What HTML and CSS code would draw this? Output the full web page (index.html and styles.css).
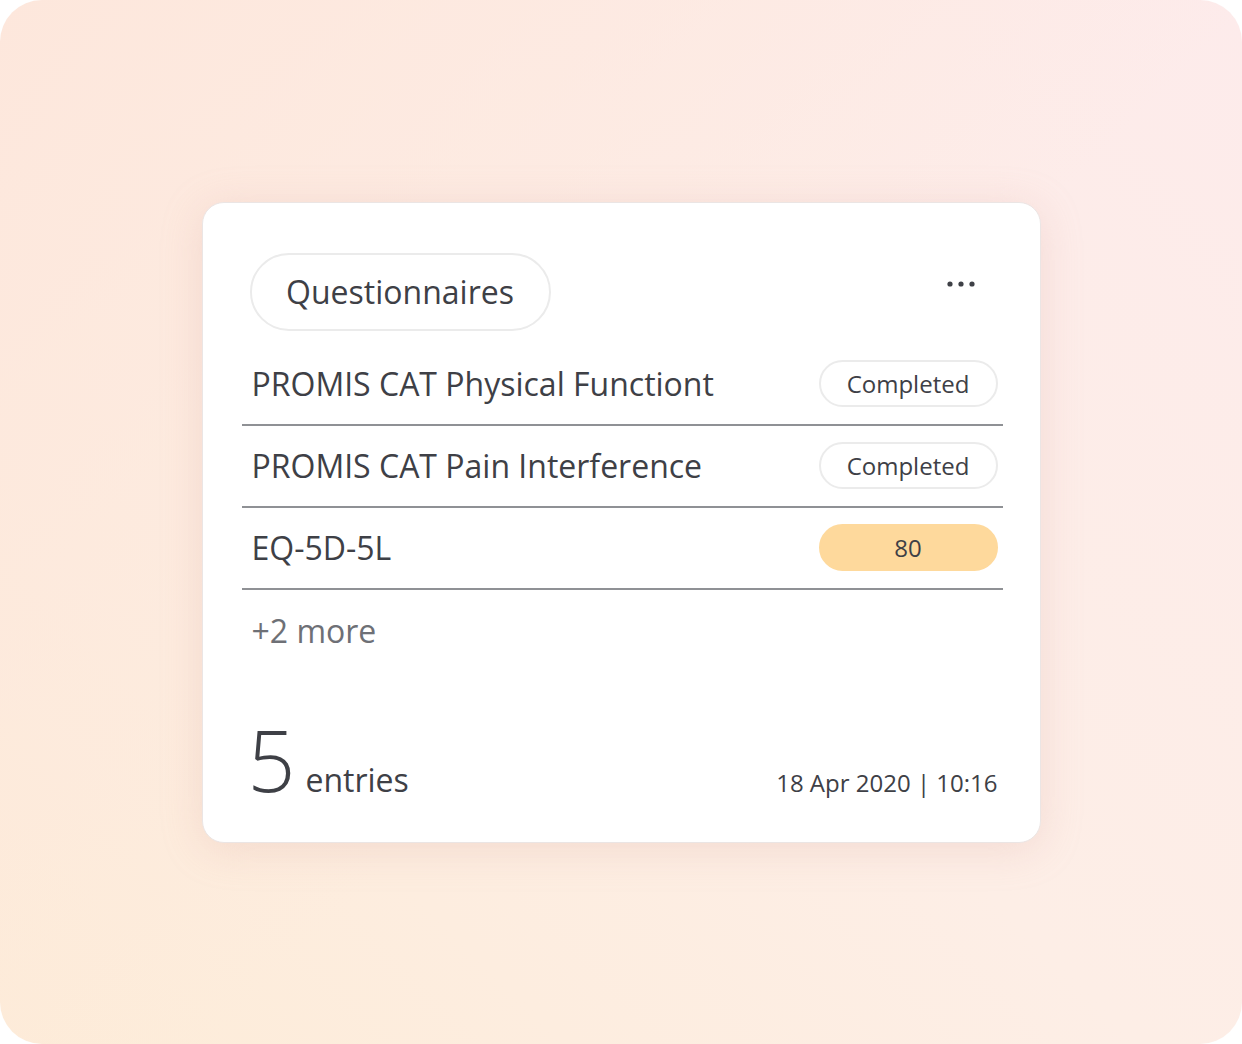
FILE: index.html
```html
<!DOCTYPE html>
<html lang="en">
<head>
<meta charset="utf-8">
<title>Questionnaires</title>
<link rel="stylesheet" href="styles.css">
</head>
<body>
<div class="frame">
  <section class="card">
    <header class="card-head">
      <span class="title-pill">Questionnaires</span>
      <button class="more-btn" aria-label="More options">
        <svg width="30" height="8" viewBox="0 0 30 8"><circle cx="4" cy="4" r="2.6" fill="#3e4046"/><circle cx="15" cy="4" r="2.6" fill="#3e4046"/><circle cx="26" cy="4" r="2.6" fill="#3e4046"/></svg>
      </button>
    </header>
    <ul class="list">
      <li class="row"><span class="name">PROMIS CAT Physical Functiont</span><span class="status">Completed</span></li>
      <li class="row"><span class="name">PROMIS CAT Pain Interference</span><span class="status">Completed</span></li>
      <li class="row"><span class="name">EQ-5D-5L</span><span class="status score">80</span></li>
      <li class="row more">+2 more</li>
    </ul>
    <footer class="card-foot">
      <div class="count"><span class="num">5</span><span class="label">entries</span></div>
      <div class="date">18 Apr 2020 | 10:16</div>
    </footer>
  </section>
</div>
</body>
</html>
```
FILE: styles.css
```css
* { box-sizing: border-box; }
html, body { margin: 0; padding: 0; background: #ffffff; }
body { font-family: "Open Sans", "Noto Sans", sans-serif; color: #3e4046; }

.frame {
  width: 1242px;
  height: 1044px;
  border-radius: 42px;
  background:
    linear-gradient(135deg, #fde7dc 0%, rgba(253,233,225,0) 55%),
    linear-gradient(45deg, #fdecd8 0%, #fdeee6 50%, #fdebeb 100%);
  display: flex;
  align-items: center;
  justify-content: center;
  overflow: hidden;
}

.card {
  width: 839px;
  height: 641px;
  background: #ffffff;
  border: 1.5px solid #ebe5e4;
  border-radius: 22px;
  box-shadow: 0 6px 40px rgba(220, 170, 160, 0.28);
  padding: 50px 37px 40px 39px;
  display: flex;
  flex-direction: column;
}

.card-head {
  display: flex;
  align-items: center;
  justify-content: space-between;
  margin-bottom: 13px;
}

.title-pill {
  margin-left: 8px;
  height: 78px;
  width: 301px;
  display: flex;
  align-items: center;
  justify-content: center;
  border: 2px solid #ebebeb;
  border-radius: 40px;
  font-size: 32px;
  color: #3e4046;
}

.more-btn {
  background: none;
  border: 0;
  padding: 0;
  margin-right: 27px;
  margin-top: -16px;
  display: flex;
  cursor: pointer;
}

.list { list-style: none; margin: 0; padding: 0; }

.row {
  height: 82px;
  border-bottom: 2px solid #8f9195;
  display: flex;
  align-items: center;
  justify-content: space-between;
  padding: 0 5px 0 10px;
}

.name { font-size: 32px; color: #3e4046; }

.status {
  width: 179px;
  height: 47px;
  border: 2px solid #ebebeb;
  border-radius: 24px;
  display: flex;
  align-items: center;
  justify-content: center;
  font-size: 24px;
  color: #3e4046;
}

.status.score {
  background: #fed99c;
  border-color: #fed99c;
}

.row.more {
  border-bottom: 0;
  font-size: 32px;
  color: #6e7076;
}

.card-foot {
  margin-top: auto;
  display: flex;
  align-items: baseline;
  justify-content: space-between;
  padding: 0 5px 0 10px;
}

.count { display: flex; align-items: baseline; gap: 12px; }
.num { font-size: 84px; font-weight: 300; line-height: 1; color: #3e4046; letter-spacing: -2px; margin-left: -4px; }
.label { font-size: 32px; color: #3e4046; }
.date { font-size: 24px; color: #3e4046; }
```
